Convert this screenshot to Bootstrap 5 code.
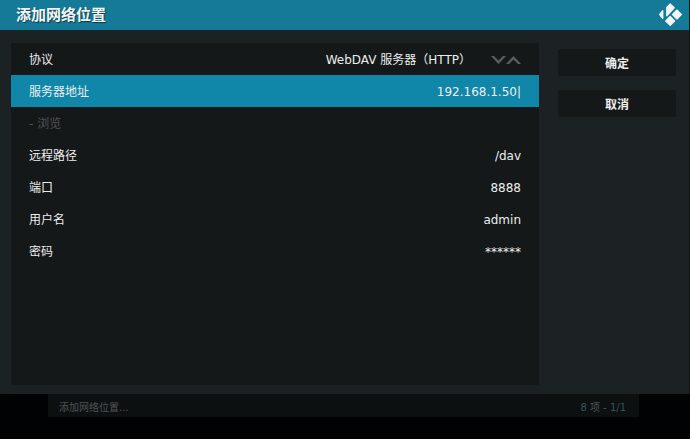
<!DOCTYPE html>
<html lang="zh-CN">
<head>
<meta charset="utf-8">
<meta name="viewport" content="width=device-width, initial-scale=1">
<title>添加网络位置</title>
<link href="https://cdn.jsdelivr.net/npm/bootstrap@5.3.0/dist/css/bootstrap.min.css" rel="stylesheet">
<style>
  body { background: #000204; color: #eceeee; font: 12px/18px "DejaVu Sans", "Noto Sans CJK SC", sans-serif; }
  .dialog { background: #1c2224; border-right: 1px solid #0c1415; }
  .titlebar { background: #157a97; height: 30px; padding: 0 7px 2px 16px; }
  .titlebar h1 { font-size: 15px; line-height: 24px; font-weight: 700; color: #f4f6f6; text-shadow: 1px 1px 1px #0a3c4c; font-family: "Noto Sans CJK SC", sans-serif; }
  .dialog-body { padding: 13px 13px 9px 11px; gap: 19px; }
  .settings { background: #141819; border-radius: 2px; }
  .setting { height: 32px; padding: 2px 18px 0; }
  .setting label, .browse { font: 12px/18px "DejaVu Sans", "Noto Sans CJK SC", sans-serif; }
  .setting.active { background: #1086a8; }
  .field { appearance: none; background: transparent; border: 0; outline: 0; padding: 0; color: inherit; text-align: right; font-family: "DejaVu Sans", "Noto Sans CJK SC", sans-serif; font-size: 12px; line-height: 18px; min-width: 0; }
  .browse, .browse:disabled { color: #505456; background: none; border: 0; padding: 0; opacity: 1; }
  .spin { background: none; border: 0; padding: 0; line-height: 0; color: #5a5e5f; }
  .spinner-gap { margin-left: 20px; }
  .actions { width: 118px; padding-top: 6px; gap: 14px; }
  .action { height: 27px; padding: 0; background: #141819; border: 0; border-radius: 2px; color: #eceeee; font: 700 12px/18px "Noto Sans CJK SC", sans-serif; }
  .statusarea { height: 45px; padding: 0 51px 0 48px; }
  .statusbar { height: 23px; padding: 4px 13px 0 11px; background: #0c1011; color: #505556; font-size: 10px; }
  .count { color: #35535f; }
</style>
</head>
<body>
<div class="d-flex flex-column vh-100">
  <main class="dialog d-flex flex-column flex-grow-1">
    <header class="titlebar d-flex align-items-center justify-content-between">
      <h1 class="m-0">添加网络位置</h1>
      <svg width="23" height="23" viewBox="358 8 68 68" fill="#f1f4f4" stroke="#f1f4f4" stroke-width="4" stroke-linejoin="round" aria-label="Kodi" role="img">
        <path d="M391 11L403 22L381 46V21ZM369 31V53L360 42ZM411 29L424 42L411 55L398 42ZM391 48L404 61L391 74L378 61Z"/>
      </svg>
    </header>
    <form class="dialog-body d-flex flex-grow-1">
      <div class="settings flex-grow-1">
        <div class="setting d-flex align-items-center">
          <label for="protocol">协议</label>
          <select id="protocol" class="field flex-grow-1"><option>WebDAV 服务器（HTTP）</option></select>
          <div class="spinner-gap d-flex">
            <button type="button" class="spin" aria-label="下一个"><svg width="15" height="8" viewBox="0 0 15 8" fill="currentColor"><path d="M0 0H3L7.5 4.6L12 0H15L7.5 8Z"/></svg></button>
            <button type="button" class="spin" aria-label="上一个"><svg width="15" height="8" viewBox="0 0 15 8" fill="currentColor"><path d="M0 8H3L7.5 3.4L12 8H15L7.5 0Z"/></svg></button>
          </div>
        </div>
        <div class="setting active d-flex align-items-center">
          <label for="server">服务器地址</label>
          <input id="server" class="field flex-grow-1" type="text" value="192.168.1.50|">
        </div>
        <div class="setting d-flex align-items-center">
          <button type="button" class="browse" disabled>- 浏览</button>
        </div>
        <div class="setting d-flex align-items-center">
          <label for="path">远程路径</label>
          <input id="path" class="field flex-grow-1" type="text" value="/dav">
        </div>
        <div class="setting d-flex align-items-center">
          <label for="port">端口</label>
          <input id="port" class="field flex-grow-1" type="text" value="8888">
        </div>
        <div class="setting d-flex align-items-center">
          <label for="user">用户名</label>
          <input id="user" class="field flex-grow-1" type="text" value="admin">
        </div>
        <div class="setting d-flex align-items-center">
          <label for="pass">密码</label>
          <input id="pass" class="field flex-grow-1" type="text" value="******">
        </div>
      </div>
      <div class="actions d-flex flex-column flex-shrink-0">
        <button type="submit" class="btn action">确定</button>
        <button type="button" class="btn action">取消</button>
      </div>
    </form>
  </main>
  <footer class="statusarea">
    <div class="statusbar d-flex align-items-center justify-content-between">
      <span>添加网络位置...</span>
      <span><span class="count">8</span> 项 - <span class="count">1/1</span></span>
    </div>
  </footer>
</div>
<script src="https://cdn.jsdelivr.net/npm/bootstrap@5.3.0/dist/js/bootstrap.bundle.min.js"></script>
</body>
</html>
